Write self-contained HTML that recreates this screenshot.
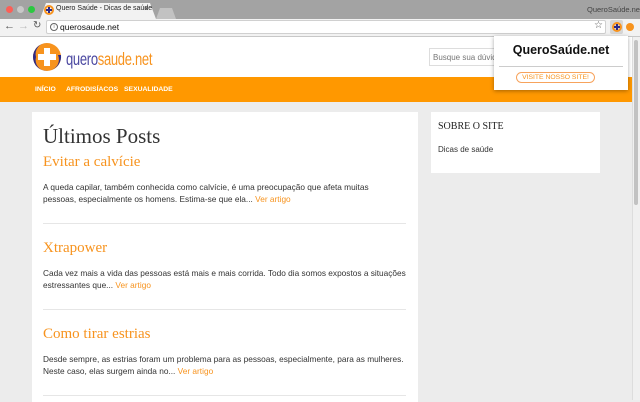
<!DOCTYPE html>
<html><head><meta charset="utf-8"><style>
*{margin:0;padding:0;box-sizing:border-box}
body{width:640px;height:400px;overflow:hidden;position:relative;background:#ececec;font-family:"Liberation Sans",sans-serif}
.abs{position:absolute;white-space:nowrap}
.serif{font-family:"Liberation Serif",serif}
p.t{font-size:8.3px;color:#333;line-height:12px;white-space:normal}
p.t a{color:#f7931e;text-decoration:none}
h3{font-weight:normal;color:#f7931e;font-size:15px}
.sep{height:1px;background:#e6e6e6;left:43px;width:363px}
.nav{top:86px;font-size:6.8px;color:#fff;font-weight:bold}
</style></head><body>
<div class="abs" style="left:0;top:0;width:640px;height:19px;background:#a3a3a3"></div>
<div class="abs" style="left:6px;top:6px;width:7px;height:7px;border-radius:50%;background:#fc5f57"></div>
<div class="abs" style="left:17px;top:6px;width:7px;height:7px;border-radius:50%;background:#c8c8c8"></div>
<div class="abs" style="left:28px;top:6px;width:7px;height:7px;border-radius:50%;background:#2bc840"></div>
<svg class="abs" style="left:38px;top:2px" width="140" height="17"><path d="M2 17 L8 1 H112 L118 17Z" fill="#f2f2f2"/><path d="M118 17 L122 6 H134 L138 17Z" fill="#c2c2c2"/></svg>
<svg class="abs" style="left:44px;top:5px" width="10" height="10"><circle cx="5" cy="5" r="4" fill="none" stroke="#f7931e" stroke-width="2"/><path d="M5 2V8M2 5H8" stroke="#2e2a86" stroke-width="2"/></svg>
<div class="abs" style="left:56px;top:5px;font-size:7px;color:#222">Quero Saúde - Dicas de saúde</div>
<div class="abs" style="left:144px;top:4px;font-size:8px;color:#444">×</div>
<div class="abs" style="left:587px;top:5px;font-size:7.5px;color:#444">QueroSaúde.net</div>
<div class="abs" style="left:0;top:19px;width:640px;height:18px;background:#f2f2f2;border-bottom:1px solid #c8c8c8"></div>
<div class="abs" style="left:4px;top:20px;font-size:11px;color:#555">←</div>
<div class="abs" style="left:18px;top:20px;font-size:11px;color:#bbb">→</div>
<div class="abs" style="left:33px;top:20px;font-size:10px;color:#555">↻</div>
<div class="abs" style="left:46px;top:20px;width:560px;height:14px;background:#fff;border:1px solid #d0d0d0;border-radius:2px"></div>
<div class="abs" style="left:50px;top:23px;width:8px;height:8px;border:1px solid #666;border-radius:50%;font-size:5px;text-align:center;line-height:6px;color:#666">i</div>
<div class="abs" style="left:60px;top:22px;font-size:8.5px;color:#111">querosaude.net</div>
<div class="abs" style="left:594px;top:20px;font-size:10px;color:#555">☆</div>
<div class="abs" style="left:610px;top:20px;width:13px;height:14px;background:#d6d6d6;border-radius:2px"></div>
<svg class="abs" style="left:612px;top:22px" width="10" height="10"><circle cx="5" cy="5" r="4" fill="none" stroke="#f7931e" stroke-width="2"/><path d="M5 2V8M2 5H8" stroke="#2e2a86" stroke-width="2"/></svg>
<div class="abs" style="left:626px;top:23px;width:8px;height:8px;border-radius:50%;background:#f7931e"></div>
<div class="abs" style="left:0;top:37px;width:632px;height:40px;background:#fff"></div>
<svg class="abs" style="left:31px;top:41px" width="34" height="34"><circle cx="16" cy="16" r="14" fill="#f7931e"/><path d="M16 2 A14 14 0 0 0 2 16 A14 14 0 0 0 16 30 A11 11 0 0 1 5 16 A11 11 0 0 1 16 2Z" fill="#2e2a86"/><path d="M30 14 A14 14 0 0 1 20 29 A11 11 0 0 0 27 14Z" fill="#2e2a86"/><path d="M13 7h6v6h6v6h-6v6h-6v-6h-6v-6h6z" fill="#fff"/></svg>
<div class="abs" style="left:66px;top:49px;font-size:13px;transform:scaleY(1.35);transform-origin:left top;letter-spacing:-0.3px"><span style="color:#4a47a0">quero</span><span style="color:#f7931e">saude.net</span></div>
<div class="abs" style="left:429px;top:48px;width:70px;height:18px;border:1px solid #ddd;font-size:8px;color:#777;padding:4px 3px;background:#fff;overflow:hidden">Busque sua dúvida</div>
<div class="abs" style="left:0;top:77px;width:632px;height:25px;background:#ff9800"></div>
<div class="abs nav" style="left:35px">INÍCIO</div>
<div class="abs nav" style="left:66px">AFRODISÍACOS</div>
<div class="abs nav" style="left:124px">SEXUALIDADE</div>
<div class="abs" style="left:632px;top:37px;width:8px;height:363px;background:#f0f0f0;border-left:1px solid #ddd"></div>
<div class="abs" style="left:634px;top:40px;width:4px;height:165px;background:#c2c2c2;border-radius:2px"></div>
<div class="abs" style="left:32px;top:112px;width:386px;height:290px;background:#fff"></div>
<div class="abs serif" style="left:43px;top:124px;font-size:21px;color:#333">Últimos Posts</div>
<h3 class="abs serif" style="left:43px;top:154px">Evitar a calvície</h3>
<p class="abs t" style="left:43px;top:181px;width:345px">A queda capilar, também conhecida como calvície, é uma preocupação que afeta muitas pessoas, especialmente os homens. Estima-se que ela... <a>Ver artigo</a></p>
<div class="abs sep" style="top:223px"></div>
<h3 class="abs serif" style="left:43px;top:240px">Xtrapower</h3>
<p class="abs t" style="left:43px;top:267px;width:372px">Cada vez mais a vida das pessoas está mais e mais corrida. Todo dia somos expostos a situações estressantes que... <a>Ver artigo</a></p>
<div class="abs sep" style="top:309px"></div>
<h3 class="abs serif" style="left:43px;top:326px">Como tirar estrias</h3>
<p class="abs t" style="left:43px;top:353px;width:375px">Desde sempre, as estrias foram um problema para as pessoas, especialmente, para as mulheres. Neste caso, elas surgem ainda no... <a>Ver artigo</a></p>
<div class="abs sep" style="top:395px"></div>
<div class="abs" style="left:431px;top:112px;width:169px;height:61px;background:#fff"></div>
<div class="abs serif" style="left:438px;top:121px;font-size:10px;color:#222">SOBRE O SITE</div>
<div class="abs" style="left:438px;top:145px;font-size:8px;color:#333">Dicas de saúde</div>
<div class="abs" style="left:494px;top:36px;width:134px;height:54px;background:#fff;box-shadow:0 1px 4px rgba(0,0,0,.35)"></div>
<div class="abs" style="left:494px;top:43px;width:134px;text-align:center;font-size:12.5px;font-weight:bold;color:#111">QueroSaúde.net</div>
<div class="abs" style="left:499px;top:66px;width:124px;height:1px;background:#ccc"></div>
<div class="abs" style="left:516px;top:72px;width:79px;height:11px;border:1px solid #f7a35c;border-radius:6px;font-size:6.8px;color:#f7931e;text-align:center;line-height:9px">VISITE NOSSO SITE!</div>
</body></html>
